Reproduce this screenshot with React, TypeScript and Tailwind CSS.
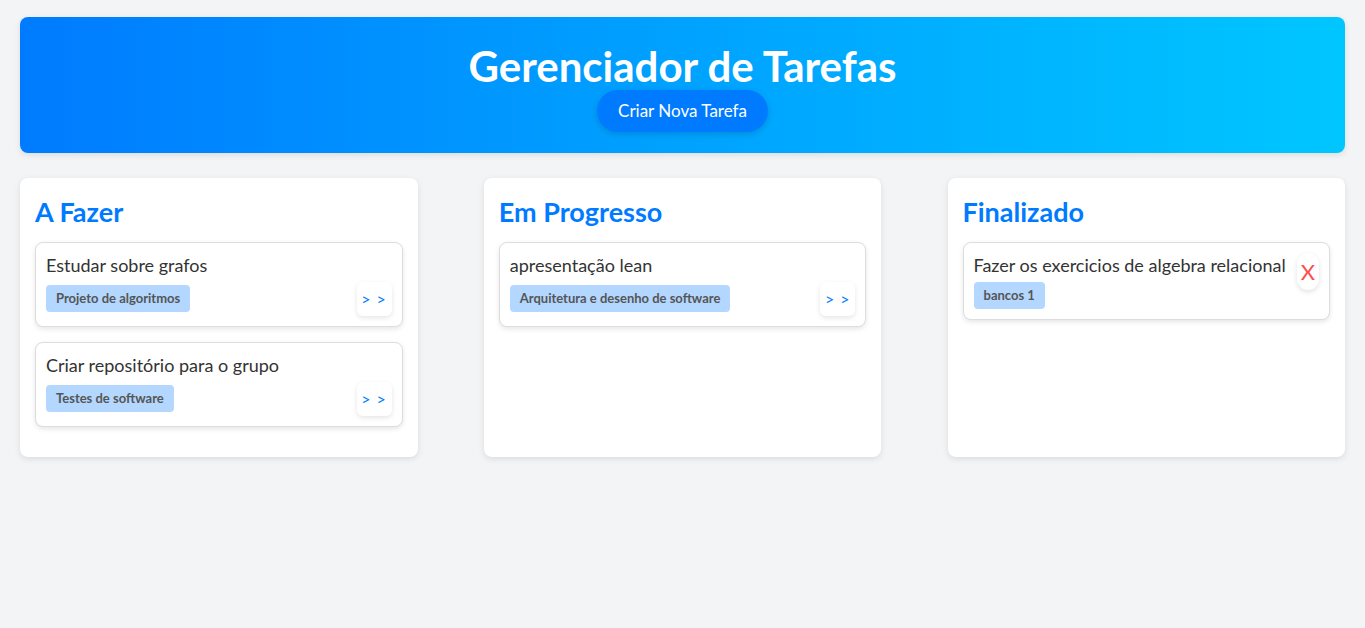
import React from "react";

interface Task {
  title: string;
  tag: string;
}

interface ColumnProps {
  title: string;
  tasks: Task[];
  done?: boolean;
}

const columns: ColumnProps[] = [
  {
    title: "A Fazer",
    tasks: [
      { title: "Estudar sobre grafos", tag: "Projeto de algoritmos" },
      { title: "Criar repositório para o grupo", tag: "Testes de software" },
    ],
  },
  {
    title: "Em Progresso",
    tasks: [
      { title: "apresentação lean", tag: "Arquitetura e desenho de software" },
    ],
  },
  {
    title: "Finalizado",
    tasks: [
      { title: "Fazer os exercicios de algebra relacional", tag: "bancos 1" },
    ],
    done: true,
  },
];

const TaskCard: React.FC<{ task: Task; done?: boolean }> = ({ task, done }) => {
  return (
    <div
      className={`flex justify-between ${
        done ? "items-start" : "items-end"
      } rounded-lg border border-[#ddd] bg-white p-[10px] shadow-[0_2px_5px_rgba(0,0,0,0.1)]`}
    >
      <div className={done ? "" : "pb-1"}>
        <div className="text-[18px] leading-[24px] text-[#333]">{task.title}</div>
        <div
          className={`${
            done ? "mt-[5px]" : "mt-2"
          } inline-block rounded bg-[#b3d7ff] px-[10px] py-[5px] text-[13px] font-bold leading-[17px] text-[#555]`}
        >
          {task.tag}
        </div>
      </div>
      {done ? (
        <button className="flex h-[37px] w-[22px] items-center justify-center rounded-full bg-white text-[22px] leading-none text-[#ff4d4d] shadow-[0_2px_5px_rgba(0,0,0,0.12)]">
          X
        </button>
      ) : (
        <button className="flex h-[34px] w-[35px] items-center justify-center rounded-md bg-white text-[16px] tracking-[1px] text-[#007bff] shadow-[0_2px_5px_rgba(0,0,0,0.1)]">
          &gt; &gt;
        </button>
      )}
    </div>
  );
};

const Column: React.FC<ColumnProps> = ({ title, tasks, done }) => {
  return (
    <div className="flex w-[30%] flex-col rounded-lg bg-white px-[15px] pt-[18px] pb-[30px] shadow-[0_2px_6px_rgba(0,0,0,0.1)]">
      <h2 className="mb-[14px] text-[27px] font-bold leading-[32px] text-[#007bff]">{title}</h2>
      <div className="flex flex-col gap-[15px]">
        {tasks.map((t, i) => (
          <TaskCard key={i} task={t} done={done} />
        ))}
      </div>
    </div>
  );
};

export default function App() {
  return (
    <div
      className="min-h-screen bg-[#f3f4f6] px-5 pt-[17px]"
      style={{ fontFamily: 'Lato, "Open Sans", sans-serif' }}
    >
      <header className="flex flex-col items-center rounded-lg bg-gradient-to-r from-[#007bff] to-[#00c6ff] px-5 pt-[25px] pb-[21px] shadow-[0_2px_6px_rgba(0,0,0,0.1)]">
        <h1 className="text-[42px] font-bold leading-[48px] text-white">Gerenciador de Tarefas</h1>
        <button className="h-[42px] rounded-full bg-[#007bff] px-[21px] text-[17px] text-white shadow-[0_2px_6px_rgba(0,0,0,0.15)]">
          Criar Nova Tarefa
        </button>
      </header>
      <main className="mt-[25px] flex items-stretch justify-between">
        {columns.map((c) => (
          <Column key={c.title} {...c} />
        ))}
      </main>
    </div>
  );
}
